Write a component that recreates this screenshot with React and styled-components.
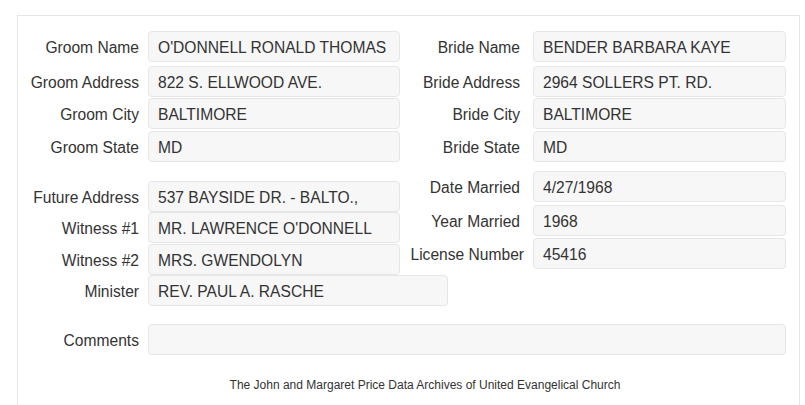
import React from 'react'
import styled, { createGlobalStyle } from 'styled-components'

const GlobalStyle = createGlobalStyle`
  body {
    margin: 0;
    background: #ffffff;
    font-family: "Liberation Sans", Arial, sans-serif;
    color: #333333;
  }
`

const Panel = styled.div`
  margin: 15px 0 0 17px;
  width: 783px;
  height: 390px;
  border: 1px solid #e6e6e6;
  border-bottom: none;
  padding-top: 15px;
  box-sizing: border-box;
`

const Section = styled.div`
  display: flex;
  align-items: flex-start;
  margin-top: ${p => p.$top || 0}px;
`

const Column = styled.div`
  display: flex;
  flex-direction: column;
  flex: none;
  width: ${p => (p.$width ? `${p.$width}px` : 'auto')};
  padding-top: ${p => p.$offset || 0}px;
`

const Row = styled.div`
  display: flex;
  align-items: center;
  height: 31px;
  margin-top: ${p => p.$gap || 0}px;
`

const Label = styled.div`
  box-sizing: border-box;
  flex: none;
  width: ${p => p.$width}px;
  padding-right: ${p => p.$pad}px;
  padding-top: 3px;
  text-align: right;
  white-space: nowrap;
  font-size: 15.6px;
  color: #333333;
`

const Field = styled.div`
  box-sizing: border-box;
  flex: none;
  width: ${p => p.$width || 252}px;
  height: 31px;
  padding: 2px 9px 0;
  display: flex;
  align-items: center;
  background: #f7f7f7;
  border: 1px solid #e6e6e6;
  border-radius: 4px;
  font-size: 15.6px;
  color: #333333;
  white-space: nowrap;
  overflow: hidden;
`

const Footer = styled.div`
  margin-top: 23px;
  padding-left: 33px;
  text-align: center;
  font-size: 12px;
  color: #333333;
`

const Entry = ({ label, value, side, gap, width, tight }) => (
  <Row $gap={gap}>
    <Label
      $width={side === 'right' ? 133 : 130}
      $pad={tight ? 9 : side === 'right' ? 13 : 9}
    >
      {label}
    </Label>
    <Field $width={width}>{value}</Field>
  </Row>
)

export default function App() {
  return (
    <>
      <GlobalStyle />
      <Panel>
        <Section>
          <Column $width={382}>
            <Entry label="Groom Name" value="O'DONNELL RONALD THOMAS" />
            <Entry label="Groom Address" value="822 S. ELLWOOD AVE." gap={4} />
            <Entry label="Groom City" value="BALTIMORE" gap={1} />
            <Entry label="Groom State" value="MD" gap={2} />
          </Column>
          <Column>
            <Entry side="right" label="Bride Name" value="BENDER BARBARA KAYE" width={253} />
            <Entry side="right" label="Bride Address" value="2964 SOLLERS PT. RD." gap={4} width={253} />
            <Entry side="right" label="Bride City" value="BALTIMORE" gap={1} width={253} />
            <Entry side="right" label="Bride State" value="MD" gap={2} width={253} />
          </Column>
        </Section>
        <Section $top={9}>
          <Column $width={382} $offset={10}>
            <Entry label="Future Address" value="537 BAYSIDE DR. - BALTO.," />
            <Entry label="Witness #1" value="MR. LAWRENCE O'DONNELL" />
            <Entry label="Witness #2" value="MRS. GWENDOLYN" gap={1} />
            <Entry label="Minister" value="REV. PAUL A. RASCHE" width={300} />
          </Column>
          <Column>
            <Entry side="right" label="Date Married" value="4/27/1968" width={253} />
            <Entry side="right" label="Year Married" value="1968" gap={3} width={253} />
            <Entry side="right" label="License Number" value="45416" gap={2} width={253} tight />
          </Column>
        </Section>
        <Section $top={18}>
          <Entry label="Comments" value="" width={638} />
        </Section>
        <Footer>The John and Margaret Price Data Archives of United Evangelical Church</Footer>
      </Panel>
    </>
  )
}
